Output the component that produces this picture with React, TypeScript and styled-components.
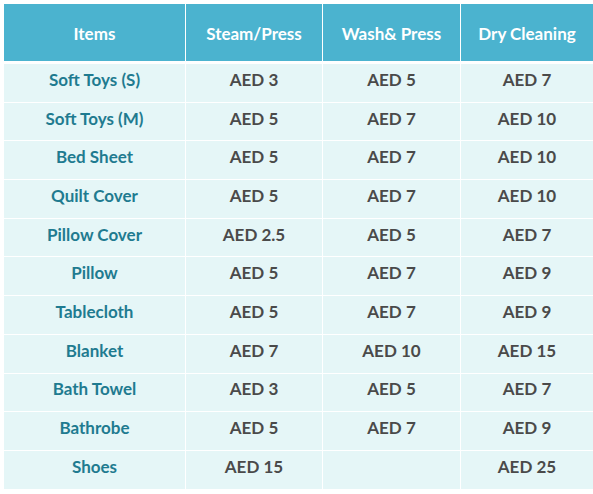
import React from "react";
import styled, { createGlobalStyle } from "styled-components";

const Global = createGlobalStyle`
  html, body { margin: 0; padding: 0; background: #ffffff; }
  body { width: 593px; height: 494px; overflow: hidden; }
`;

const Page = styled.div`
  padding: 4px 0 0 4px;
  font-family: "Lato", "Open Sans", sans-serif;
  font-weight: 700;
`;

const Table = styled.table`
  border-collapse: separate;
  border-spacing: 0;
  width: 589px;
  table-layout: fixed;
`;

const HeadCell = styled.th<{ $w: number }>`
  box-sizing: border-box;
  width: ${(p) => p.$w}px;
  height: 60px;
  padding: 2px 0 0 0;
  background: #4bb3cf;
  color: #ffffff;
  font-size: 17px;
  font-weight: 700;
  text-align: center;
  vertical-align: middle;
  border-left: 1.5px solid #ffffff;
  border-bottom: 3px solid #ffffff;
  &:first-child { border-left: none; }
`;

const Row = styled.tr`
  height: 38.7px;
`;

const Cell = styled.td<{ $item?: boolean }>`
  box-sizing: border-box;
  padding: 0 0 7px 0;
  background: #e5f6f7;
  color: ${(p) => (p.$item ? "#1f7b90" : "#4a4a4a")};
  font-size: 17px;
  text-align: center;
  vertical-align: middle;
  border-left: 1.5px solid #ffffff;
  border-bottom: 1px solid #ffffff;
  &:first-child { border-left: none; }
`;

const cols = [
  { name: "Items", w: 181 },
  { name: "Steam/Press", w: 137 },
  { name: "Wash& Press", w: 138 },
  { name: "Dry Cleaning", w: 133 },
];

const rows: [string, string, string, string][] = [
  ["Soft Toys (S)", "AED 3", "AED 5", "AED 7"],
  ["Soft Toys (M)", "AED 5", "AED 7", "AED 10"],
  ["Bed Sheet", "AED 5", "AED 7", "AED 10"],
  ["Quilt Cover", "AED 5", "AED 7", "AED 10"],
  ["Pillow Cover", "AED 2.5", "AED 5", "AED 7"],
  ["Pillow", "AED 5", "AED 7", "AED 9"],
  ["Tablecloth", "AED 5", "AED 7", "AED 9"],
  ["Blanket", "AED 7", "AED 10", "AED 15"],
  ["Bath Towel", "AED 3", "AED 5", "AED 7"],
  ["Bathrobe", "AED 5", "AED 7", "AED 9"],
  ["Shoes", "AED 15", "", "AED 25"],
];

export default function App() {
  return (
    <Page>
      <Global />
      <Table>
        <thead>
          <tr>
            {cols.map((c) => (
              <HeadCell key={c.name} $w={c.w}>
                {c.name}
              </HeadCell>
            ))}
          </tr>
        </thead>
        <tbody>
          {rows.map((r) => (
            <Row key={r[0]}>
              {r.map((v, i) => (
                <Cell key={i} $item={i === 0}>
                  {v}
                </Cell>
              ))}
            </Row>
          ))}
        </tbody>
      </Table>
    </Page>
  );
}
